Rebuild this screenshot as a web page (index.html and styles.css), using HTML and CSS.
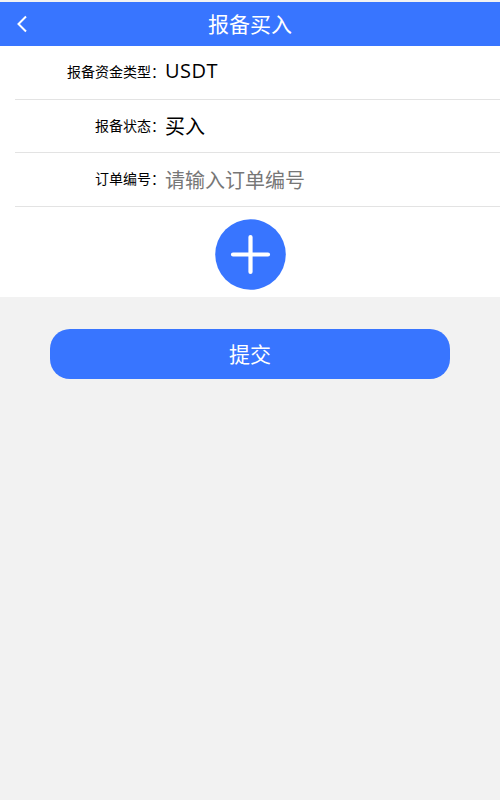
FILE: index.html
```html
<!DOCTYPE html>
<html lang="zh-CN">
<head>
<meta charset="UTF-8">
<meta name="viewport" content="width=device-width, initial-scale=1.0">
<title>报备买入</title>
<link rel="stylesheet" href="styles.css">
</head>
<body>

<header class="top-bar">
  <a href="#" class="back-link" aria-label="返回">
    <svg width="12" height="18" viewBox="0 0 12 18">
      <path d="M10 1.5 L2.5 9 L10 16.5" fill="none" stroke="#fff" stroke-width="2"/>
    </svg>
  </a>
  <h1 class="page-title">报备买入</h1>
</header>

<main>
  <section class="form-panel">
    <div class="form-row">
      <label class="row-label">报备资金类型：</label>
      <span class="row-value row-code">USDT</span>
    </div>
    <div class="form-row">
      <label class="row-label">报备状态：</label>
      <span class="row-value">买入</span>
    </div>
    <div class="form-row">
      <label class="row-label" for="order-no">订单编号：</label>
      <input type="text" id="order-no" class="row-input" placeholder="请输入订单编号">
    </div>
    <div class="upload-box">
      <button type="button" class="add-btn" aria-label="添加">
        <svg width="71" height="71" viewBox="0 0 71 71">
          <circle cx="35.5" cy="35.5" r="35.3" fill="#3875ff"/>
          <path d="M18 35.5 H53 M35.5 18 V53" fill="none" stroke="#fff" stroke-width="4.2" stroke-linecap="round"/>
        </svg>
      </button>
    </div>
  </section>

  <div class="submit-box">
    <button type="button" class="submit-btn">提交</button>
  </div>
</main>

</body>
</html>
```

FILE: styles.css
```css
body, html {
  margin: 0;
  padding: 0;
  height: 100%;
  font-family: "Open Sans", "Noto Sans CJK SC", sans-serif;
}

body {
  background-color: #f2f2f2;
  padding-top: 2px;
  box-sizing: border-box;
}

.top-bar {
  position: relative;
  display: flex;
  align-items: center;
  justify-content: center;
  height: 44px;
  background-color: #3875ff;
  color: white;
}

.back-link {
  position: absolute;
  left: 16px;
  top: 13px;
  display: block;
  line-height: 0;
}

.page-title {
  margin: 0;
  padding-bottom: 2px;
  font-size: 21px;
  font-weight: normal;
}

.form-panel {
  background-color: white;
  height: 251px;
}

.form-row {
  display: flex;
  align-items: center;
  height: 52.7px;
  margin-left: 15px;
  border-bottom: 1px solid #e3e3e3;
}

.row-label {
  width: 150px;
  padding-bottom: 3px;
  text-align: right;
  font-size: 14px;
  color: #000;
}

.row-value {
  padding-bottom: 2px;
  font-size: 20px;
  color: #000;
}

.row-code {
  padding-bottom: 3px;
  letter-spacing: 0.5px;
}

.row-input {
  flex: 1;
  min-width: 0;
  padding: 2px 0 0;
  border: none;
  outline: none;
  font-family: inherit;
  font-size: 20px;
  color: #000;
}

.row-input::placeholder {
  color: #777;
}

.upload-box {
  display: flex;
  justify-content: center;
  padding: 12px 0 0 1px;
}

.add-btn {
  width: 71px;
  height: 71px;
  padding: 0;
  border: none;
  background: none;
  line-height: 0;
}

.submit-box {
  padding: 32px 50px;
}

.submit-btn {
  display: block;
  width: 100%;
  height: 50px;
  padding: 0 0 2px;
  border: none;
  border-radius: 20px;
  background-color: #3875ff;
  color: white;
  font-family: inherit;
  font-size: 21px;
}
```
